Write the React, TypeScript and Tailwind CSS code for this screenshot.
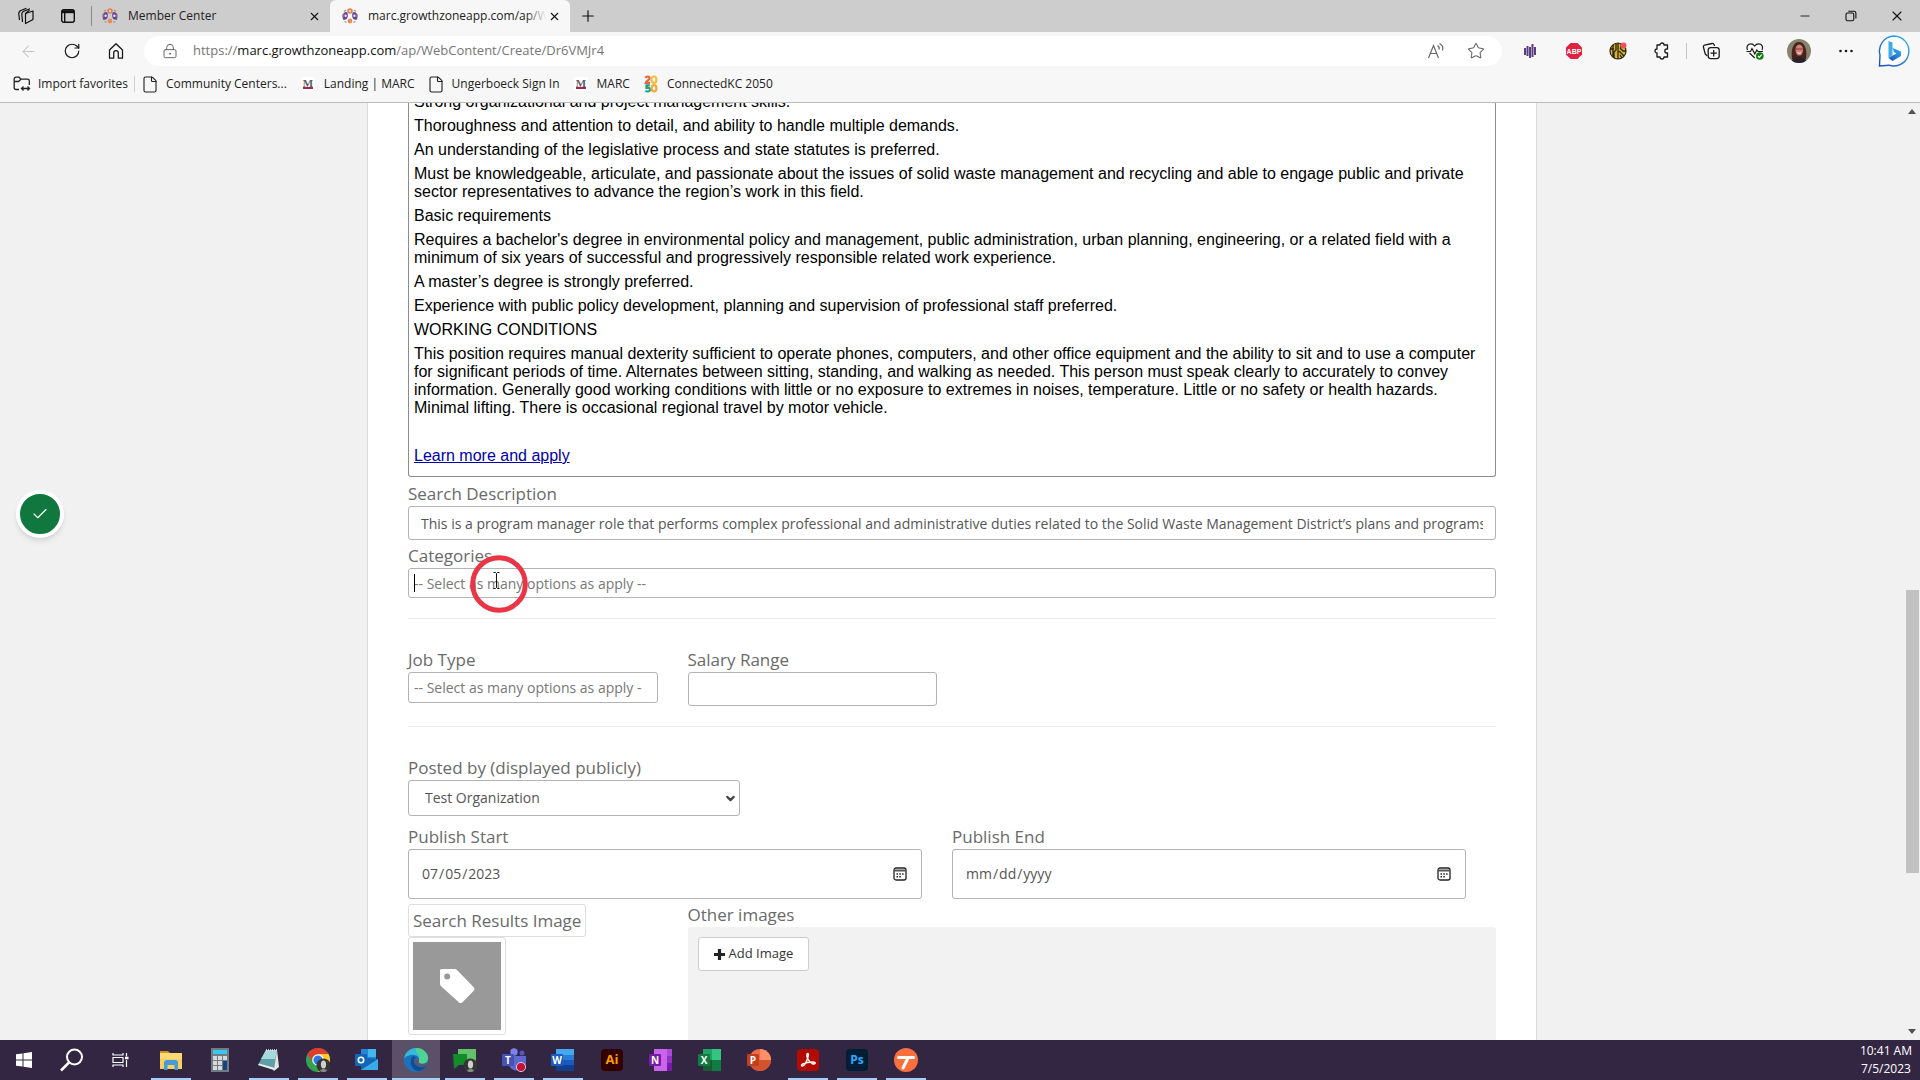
import type { ReactNode } from "react";
import {
  ArrowLeft,
  Check,
  ChevronDown,
  File,
  LockKeyhole,
  Minus,
  Plus,
  RotateCw,
  Star,
  X,
} from "lucide-react";

const editorParagraphs = [
  "Strong organizational and project management skills.",
  "Thoroughness and attention to detail, and ability to handle multiple demands.",
  "An understanding of the legislative process and state statutes is preferred.",
  "Must be knowledgeable, articulate, and passionate about the issues of solid waste management and recycling and able to engage public and private sector representatives to advance the region’s work in this field.",
  "Basic requirements",
  "Requires a bachelor's degree in environmental policy and management, public administration, urban planning, engineering, or a related field with a minimum of six years of successful and progressively responsible related work experience.",
  "A master’s degree is strongly preferred.",
  "Experience with public policy development, planning and supervision of professional staff preferred.",
  "WORKING CONDITIONS",
  "This position requires manual dexterity sufficient to operate phones, computers, and other office equipment and the ability to sit and to use a computer for significant periods of time. Alternates between sitting, standing, and walking as needed. This person must speak clearly to accurately to convey information. Generally good working conditions with little or no exposure to extremes in noises, temperature. Little or no safety or health hazards. Minimal lifting. There is occasional regional travel by motor vehicle.",
];

const fieldClass =
  "block w-full rounded-[3px] border border-[#b3b3b3] bg-white text-sm text-[#555] placeholder:text-[#777] outline-none";

/* ---------- browser chrome ---------- */

function GrowthZoneIcon() {
  return (
    <svg width="16" height="16" viewBox="0 0 16 16" className="shrink-0">
      <circle cx="8" cy="3" r="2" fill="#f0c9b5" stroke="#dd8257" strokeWidth="1.6" />
      <circle cx="8" cy="13" r="2.4" fill="#e88b5c" />
      <path d="M4.500 4C1 4 0 7 1 11.500c2.500 1 4.800-.5 4.800-3.500s-.3-3.400-1.300-4z" fill="#5c4799" />
      <path d="M11.500 4c3.500 0 4.500 3 3.500 7.500-2.500 1-4.800-.5-4.800-3.500s.3-3.400 1.300-4z" fill="#5c4799" />
      <circle cx="3.600" cy="7.700" r="1.200" fill="#e9e4f2" />
      <circle cx="12.400" cy="7.700" r="1.200" fill="#e9e4f2" />
      <path d="M2 3.500l2-1.500M14 3.500l-2-1.500M2.500 13.500l2 1M13.500 13.500l-2 1M.8 6v3.500M15.200 6v3.500" stroke="#c98a75" strokeWidth="1.300" />
    </svg>
  );
}

function MarcIcon() {
  return (
    <svg width="14" height="14" viewBox="0 0 14 14" className="shrink-0">
      <rect width="14" height="14" fill="#fff" />
      <text x="7" y="10" textAnchor="middle" fontSize="11" fontWeight="700" fontFamily="Liberation Serif, serif" fill="#5d5d66">
        M
      </text>
      <rect x="2" y="10" width="10" height="2" fill="#a3264c" />
    </svg>
  );
}

/* "2050" stacked in two rows, drawn with thick strokes */
function ConnectedIcon() {
  return (
    <svg width="14" height="18" viewBox="0 0 14 18" fill="none" strokeWidth="2.200" className="shrink-0">
      <path d="M1.500 3C2 1 5.500 1 5.500 3.200 5.500 5 2.500 6 1.800 7.800h4.200" stroke="#e8663f" />
      <ellipse cx="10" cy="4.700" rx="2.400" ry="3.200" stroke="#f5bd3d" />
      <path d="M5.800 10.300H2.500V13c3-.6 3.600.5 3.500 1.800-.2 2-3.300 2.200-4.500.8" stroke="#20a088" />
      <ellipse cx="10" cy="13.300" rx="2.400" ry="3.200" stroke="#f0a93a" />
    </svg>
  );
}

function ImportIcon() {
  return (
    <svg width="18" height="16" viewBox="0 0 18 16" fill="none" stroke="#222" strokeWidth="1.300" className="shrink-0">
      <path d="M6 13.500H3A1.800 1.800 0 0 1 1.200 11.700V3A1.800 1.800 0 0 1 3 1.200h3l2 2h6.500A1.800 1.800 0 0 1 16.300 5v4" />
      <path d="M1.200 5.500H5.500L8 3.200M8.500 12.500h8M10.500 10.500l-2 2 2 2M14.500 10.500l2 2-2 2" />
    </svg>
  );
}

function Tab({ title, active }: { title: string; active?: boolean }) {
  return (
    <div
      className={
        active
          ? "flex h-full w-60 items-center rounded-t-md bg-[#f7f7f7] pr-2 pl-3"
          : "flex h-full w-[238px] items-center pr-2 pl-[10px]"
      }
    >
      <GrowthZoneIcon />
      <span className="relative ml-[10px] min-w-0 flex-1 overflow-hidden whitespace-nowrap text-[#222]">
        {title}
        {active ? (
          <span className="absolute inset-y-0 right-0 w-5 bg-linear-to-r from-transparent to-[#f7f7f7]" />
        ) : null}
      </span>
      <button type="button" aria-label="Close tab" className="flex size-4 items-center justify-center">
        <X size={13} strokeWidth={2} />
      </button>
    </div>
  );
}

function TabStrip() {
  return (
    <div className="flex h-8 items-stretch bg-[#cdcdcd] text-xs text-[#111]">
      <button type="button" aria-label="Workspaces" className="flex w-[52px] items-center justify-center">
        <svg width="18" height="18" viewBox="0 0 18 18" fill="none" stroke="currentColor" strokeWidth="1.200">
          <path d="M8.500 6.500 16 4v8.500L8.500 16.500z" strokeLinejoin="round" />
          <path d="M5.500 15 4.800 6.500 6.200 4.500 13 1.800M2.500 13l-.8-7L3.200 3.800 9.500 1.200M8.500 6.500 12.500 3.200" />
        </svg>
      </button>
      <button type="button" aria-label="Tab actions" className="flex w-8 items-center justify-center">
        <svg width="16" height="16" viewBox="0 0 16 16" fill="none" stroke="currentColor" strokeWidth="1.400">
          <rect x="1.700" y="1.700" width="12.600" height="12.600" rx="2" />
          <path d="M2 3.700h12" strokeWidth="3" />
          <path d="M4.700 5v9" />
        </svg>
      </button>
      <span className="my-1.5 ml-[7px] w-px bg-[#888]" />
      <Tab title="Member Center" />
      <Tab title="marc.growthzoneapp.com/ap/WebContent" active />
      <button type="button" aria-label="New tab" className="flex w-9 items-center justify-center">
        <Plus size={18} strokeWidth={1.600} />
      </button>
      <div className="ml-auto flex">
        <button type="button" aria-label="Minimize" className="flex w-[46px] items-center justify-center">
          <Minus size={14} strokeWidth={1.500} />
        </button>
        <button type="button" aria-label="Restore" className="flex w-[46px] items-center justify-center">
          <svg width="12" height="12" viewBox="0 0 12 12" fill="none" stroke="currentColor" strokeWidth="1.100">
            <rect x="1" y="3" width="7.800" height="7.800" rx="1.500" />
            <path d="M3.300 1.200H9A1.900 1.900 0 0 1 10.900 3v5.500" />
          </svg>
        </button>
        <button type="button" aria-label="Close" className="flex w-[46px] items-center justify-center">
          <X size={16} strokeWidth={1.600} />
        </button>
      </div>
    </div>
  );
}

function ToolButton({ label, children }: { label: string; children: ReactNode }) {
  return (
    <button type="button" aria-label={label} className="flex h-8 w-11 shrink-0 items-center justify-center text-[#1b1b1b]">
      {children}
    </button>
  );
}

function Extensions() {
  return (
    <>
      <ToolButton label="Recorder">
        <svg width="12" height="14" viewBox="0 0 12 14" stroke="#5a3d82" strokeWidth="2">
          <path d="M1 4v7M3.500 2v10M6 3v11M8.500 0v13M11 3v8" />
        </svg>
      </ToolButton>
      <ToolButton label="Adblock Plus">
        <svg width="18" height="18" viewBox="0 0 18 18">
          <path d="M5.500 1h7L17 5.500v7L12.500 17h-7L1 12.500v-7z" fill="#e0213f" />
          <text x="9" y="12" textAnchor="middle" fontSize="7" fontWeight="700" fontFamily="Liberation Sans, sans-serif" fill="#fff">ABP</text>
        </svg>
      </ToolButton>
      <ToolButton label="Circuit">
        <svg width="18" height="18" viewBox="0 0 18 18" fill="none">
          <circle cx="9" cy="9" r="8" fill="#d9b52f" />
          <path d="M4 3v12M7 1.500V8L5 10v6M9 1v16M10 9l5 5M11 6l3 3h3M11 13l2 3M2 7h3M12 2v4" stroke="#28230f" strokeWidth="1.300" />
          <circle cx="9" cy="9" r="8" stroke="#2a2510" strokeWidth="1.200" />
          <circle cx="14.500" cy="3.500" r="3" fill="#f0535c" />
        </svg>
      </ToolButton>
      <ToolButton label="Extensions">
        <svg width="18" height="18" viewBox="0 0 18 18" fill="none" stroke="currentColor" strokeWidth="1.300" strokeLinejoin="round">
          <path d="M7 3a2 2 0 0 1 4 0h3.500v4h-.7a2 2 0 0 0 0 4h.7v4H11a2 2 0 0 1-4 0H4v-4a2 2 0 0 1 0-4V3z" />
        </svg>
      </ToolButton>
      <span className="mx-[2px] h-4 w-px bg-[#c4c4c4]" />
      <ToolButton label="Collections">
        <svg width="18" height="18" viewBox="0 0 18 18" fill="none" stroke="currentColor" strokeWidth="1.300" strokeLinecap="round">
          <path d="M12.500 3.500 11.800 2.200A1.500 1.500 0 0 0 10 1.500L2.500 3.200A1.500 1.500 0 0 0 1.400 5l1.800 7 1.600 1.500" />
          <rect x="6.200" y="5.600" width="11" height="11" rx="2.500" />
          <path d="M11.700 8.300v5.600M8.900 11.100h5.600" />
        </svg>
      </ToolButton>
      <ToolButton label="Browser essentials">
        <svg width="18" height="18" viewBox="0 0 18 18" fill="none" stroke="currentColor" strokeWidth="1.200">
          <path d="M1.500 8C0 4.500 2 1.800 4.800 1.800c2 0 3 .9 3.900 2.200.9-1.300 2-2.200 4-2.200C15.500 1.800 17.500 4.500 16 8M3.500 11l5.200 5M.5 9.500h4L6 6.500l2.800 5.500 2-4 1.300 1.500H17" />
          <circle cx="13.800" cy="14" r="3.800" fill="#0f7b0f" stroke="none" />
          <path d="m12 14 1.300 1.300 2.400-2.600" stroke="#fff" />
        </svg>
      </ToolButton>
      <ToolButton label="Profile">
        <svg width="24" height="24" viewBox="0 0 24 24">
          <clipPath id="avatar">
            <circle cx="12" cy="12" r="12" />
          </clipPath>
          <g clipPath="url(#avatar)">
            <rect width="24" height="24" fill="#87836f" />
            <path d="M5 20C3.500 9 7 3 12 3s8.500 6 7 17z" fill="#4a241c" />
            <path d="M4 24c1-5 4-6 8-6s7 1 8 6z" fill="#29222a" />
            <ellipse cx="12.300" cy="11" rx="3.800" ry="5.500" fill="#c98575" />
            <path d="M8.800 10h7" stroke="#9c2d39" />
            <path d="M10.500 13.500c1 1 2.500 1 3.500 0" stroke="#fff" fill="none" />
          </g>
        </svg>
      </ToolButton>
      <span className="w-[3px]" />
      <ToolButton label="Settings and more">
        <svg width="16" height="4" viewBox="0 0 16 4" fill="currentColor">
          <circle cx="2.500" cy="2" r="1.300" />
          <circle cx="8" cy="2" r="1.300" />
          <circle cx="13.500" cy="2" r="1.300" />
        </svg>
      </ToolButton>
      <button type="button" aria-label="Bing" className="ml-2 flex w-9 shrink-0 items-center justify-center">
        <svg width="32" height="32" viewBox="0 0 32 32" fill="none">
          <defs>
            <linearGradient id="bing" x1="0" y1="1" x2="1" y2="0">
              <stop stopColor="#1b4aba" />
              <stop offset="1" stopColor="#38b6ec" />
            </linearGradient>
          </defs>
          <path d="M16 1a15 15 0 1 1-5 29.200L1.500 31l.5-11A15 15 0 0 1 16 1z" fill="#fff" stroke="url(#bing)" strokeWidth="1.400" />
          <path d="m10.500 6 4 1.500V20l-4 3z" fill="#3aaeea" />
          <path d="m10.500 23 4-2.500 4-2-2.500-1.500-1.300-4 8.300 3.500v4.500l-8.500 5z" fill="url(#bing)" />
        </svg>
      </button>
    </>
  );
}

function Toolbar() {
  return (
    <div className="flex h-[38px] items-center bg-[#f7f7f7] pr-2 pl-[6px]">
      <button type="button" aria-label="Back" className="flex w-11 justify-center text-[#c6c6c6]">
        <ArrowLeft size={19} strokeWidth={1.300} />
      </button>
      <ToolButton label="Refresh">
        <RotateCw size={18} strokeWidth={1.600} />
      </ToolButton>
      <ToolButton label="Home">
        <svg width="18" height="18" viewBox="0 0 18 18" fill="none" stroke="currentColor" strokeWidth="1.300" strokeLinejoin="round">
          <path d="M2.500 8 9 1.800 15.500 8v8.200h-4.200V11a2.300 2.300 0 0 0-4.600 0v5.200H2.500z" />
        </svg>
      </ToolButton>
      <div className="ml-[6px] flex h-[30px] min-w-0 flex-1 items-center rounded-full bg-white pl-[18px] text-[#666]">
        <LockKeyhole size={16} strokeWidth={1.500} className="shrink-0" />
        <div className="ml-[15px] flex-1 truncate text-[13px] text-[#767676]">
          https://<span className="text-[#111]">marc.growthzoneapp.com</span>/ap/WebContent/Create/Dr6VMJr4
        </div>
        <button type="button" aria-label="Read aloud" className="flex w-10 justify-center">
          <svg width="18" height="18" viewBox="0 0 18 18" fill="none" stroke="currentColor" strokeWidth="1.200">
            <path d="M1.500 16 6.500 3.500 11.500 16M3.300 11.500h6.400M10.500 3.500c1.500 1 2 2.500 1.500 4M12.500 1.500c3 1.500 4 4 3 7" />
          </svg>
        </button>
        <button type="button" aria-label="Favorite" className="mr-1.5 flex w-10 justify-center">
          <Star size={18} strokeWidth={1.400} />
        </button>
      </div>
      <div className="ml-[6px] flex items-center">
        <Extensions />
      </div>
    </div>
  );
}

function Bookmark({ icon, label }: { icon: ReactNode; label: string }) {
  return (
    <a href="#bookmark" className="flex items-center gap-[7px] whitespace-nowrap">
      <span className="flex w-[18px] justify-center">{icon}</span>
      {label}
    </a>
  );
}

function BookmarkBar() {
  const page = <File size={19} strokeWidth={1.500} />;

  return (
    <nav className="flex h-[33px] items-center border-b border-[#bbb] bg-[#f7f7f7] pb-1 pl-[13px] text-xs text-[#222]">
      <Bookmark icon={<ImportIcon />} label="Import favorites" />
      <span className="mx-[6px] h-4 w-px bg-[#d0d0d0]" />
      <div className="flex gap-3">
        <Bookmark icon={page} label="Community Centers..." />
        <Bookmark icon={<MarcIcon />} label="Landing | MARC" />
        <Bookmark icon={page} label="Ungerboeck Sign In" />
        <Bookmark icon={<MarcIcon />} label="MARC" />
        <Bookmark icon={<ConnectedIcon />} label="ConnectedKC 2050" />
      </div>
    </nav>
  );
}

/* ---------- page content ---------- */

function Label({ htmlFor, children }: { htmlFor: string; children: ReactNode }) {
  return (
    <label htmlFor={htmlFor} className="block text-[17px] leading-6 text-[#6a6a6a]">
      {children}
    </label>
  );
}

function DateField({ id, label, value }: { id: string; label: string; value?: string }) {
  return (
    <div>
      <Label htmlFor={id}>{label}</Label>
      <div className="relative">
        <input
          id={id}
          type="date"
          defaultValue={value}
          className={`${fieldClass} h-[50px] px-3 [&::-webkit-calendar-picker-indicator]:opacity-0`}
        />
        <svg width="14" height="14" viewBox="0 0 14 14" fill="none" className="pointer-events-none absolute top-[18px] right-[15px]">
          <rect x="1" y="1" width="12" height="12" rx="2" stroke="#222" strokeWidth="1.300" />
          <path d="M1 3.500h12" stroke="#555" strokeWidth="2" />
          <path d="M3.500 7h1.500M6.300 7h1.500M9.100 7h1.500M3.500 9.700h1.500M6.300 9.700h1.500" stroke="#222" strokeWidth="1.400" />
        </svg>
      </div>
    </div>
  );
}

function DescriptionEditor() {
  return (
    <div className="flex h-[374px] flex-col justify-end overflow-hidden rounded-b-[3px] border border-t-0 border-[#8c8c8c] px-[5px] pb-[11px] font-['Liberation_Sans',Arial,sans-serif] text-base leading-[18px] text-black">
      <div className="space-y-[6px]">
        {editorParagraphs.map((text) => (
          <p key={text}>{text}</p>
        ))}
        <p>&nbsp;</p>
        <p>
          <a href="#apply" className="text-[#0000a8] underline">
            Learn more and apply
          </a>
        </p>
      </div>
    </div>
  );
}

function ClickMarker() {
  return (
    <svg width="58" height="58" viewBox="0 0 58 58" fill="none" className="pointer-events-none absolute -top-[13px] left-[62px]">
      <circle cx="29" cy="29" r="26.300" stroke="#ea3546" strokeWidth="5" />
      <path d="M23.500 17.500h2l1 1 1-1h2M26.500 18.500v14M23.500 33.500h2l1-1 1 1h2" stroke="#111" />
    </svg>
  );
}

function JobForm() {
  return (
    <form className="mx-auto h-full w-full max-w-[1170px] border-x border-[#dcdce0] bg-white px-10">
      <DescriptionEditor />

      <div className="mt-[5px]">
        <Label htmlFor="search-description">Search Description</Label>
        <input
          id="search-description"
          type="text"
          className={`${fieldClass} h-[34px] px-3`}
          defaultValue="This is a program manager role that performs complex professional and administrative duties related to the Solid Waste Management District’s plans and programs"
        />
      </div>

      <div className="mt-1">
        <Label htmlFor="categories">Categories</Label>
        <div className="relative">
          <input
            id="categories"
            type="text"
            placeholder="-- Select as many options as apply --"
            className={`${fieldClass} h-[30px] px-[5px]`}
          />
          <span className="absolute top-[6px] left-[6px] h-[18px] w-px bg-black" />
          <ClickMarker />
        </div>
      </div>

      <hr className="mt-5 mb-[29px] border-[#ebebeb]" />

      <div className="grid grid-cols-4 gap-x-[30px]">
        <div>
          <Label htmlFor="job-type">Job Type</Label>
          <input
            id="job-type"
            type="text"
            placeholder="-- Select as many options as apply --"
            className={`${fieldClass} h-[31px] pr-[15px] pl-[5px]`}
          />
        </div>
        <div>
          <Label htmlFor="salary">Salary Range</Label>
          <input id="salary" type="text" className={`${fieldClass} h-[34px] px-3`} />
        </div>
      </div>

      <hr className="mt-5 mb-[29px] border-[#ebebeb]" />

      <Label htmlFor="posted-by">Posted by (displayed publicly)</Label>
      <div className="relative w-[332px]">
        <select id="posted-by" className={`${fieldClass} h-9 appearance-none px-4`}>
          <option>Test Organization</option>
        </select>
        <ChevronDown size={13} strokeWidth={4} className="pointer-events-none absolute top-3 right-[3px] text-[#444]" />
      </div>

      <div className="mt-[9px] grid grid-cols-2 gap-x-[30px] pr-[30px]">
        <DateField id="publish-start" label="Publish Start" value="2023-07-05" />
        <DateField id="publish-end" label="Publish End" />
      </div>

      <div className="mt-1 grid grid-cols-4 gap-x-[30px]">
        <div className="flex flex-col items-start pt-px">
          <label
            htmlFor="results-image"
            className="rounded-[3px] border border-[#dedede] px-1 text-[17px] leading-[31px] whitespace-nowrap text-[#6a6a6a]"
          >
            Search Results Image
          </label>
          <button id="results-image" type="button" className="rounded-[3px] border border-[#dedede] p-1">
            <span className="flex size-[88px] items-center justify-center bg-[#999]">
              <svg width="36" height="36" viewBox="0 0 36 36">
                <path
                  fillRule="evenodd"
                  d="M3 1h12c1.500 0 2.500.4 3.500 1.400L34.500 19c1.300 1.400 1.300 2.600 0 4L23.500 34.200c-1.200 1.200-2.500 1.200-3.700 0L2.300 18.500C1.300 17.500 1 16.500 1 15V3c0-1.300.7-2 2-2zm5.200 4.500a3 3 0 1 0 0 6 3 3 0 0 0 0-6z"
                  fill="#fff"
                />
              </svg>
            </span>
          </button>
        </div>
        <div className="col-span-3">
          <Label htmlFor="add-image">Other images</Label>
          <div className="h-40 rounded-[3px] bg-[#f2f2f2] px-[10px] pt-[10px]">
            <button
              id="add-image"
              type="button"
              className="flex h-[34px] items-center gap-1 rounded-[3px] border border-[#ccc] bg-white px-[15px] text-[13px] text-[#333]"
            >
              <svg width="11" height="11" viewBox="0 0 11 11">
                <path d="M5.500 0v11M0 5.500h11" stroke="#222" strokeWidth="3.200" />
              </svg>
              Add Image
            </button>
          </div>
        </div>
      </div>
    </form>
  );
}

function Scrollbar() {
  return (
    <div className="flex w-4 shrink-0 flex-col items-center bg-[#f1f1f1] py-1.5 text-[#505050]">
      <svg width="8" height="5" viewBox="0 0 8 5" fill="currentColor">
        <path d="M0 5 4 0l4 5z" />
      </svg>
      <div className="flex w-full flex-1 flex-col items-center">
        <span className="basis-[52%]" />
        <span className="w-[13px] basis-[31%] bg-[#c1c1c1]" />
      </div>
      <svg width="8" height="5" viewBox="0 0 8 5" fill="currentColor">
        <path d="M0 0h8L4 5z" />
      </svg>
    </div>
  );
}

/* ---------- taskbar ---------- */

function AppIcon({ children }: { children: ReactNode }) {
  return (
    <svg width="24" height="24" viewBox="0 0 24 24" fill="none" fontFamily="Open Sans, sans-serif" fontWeight="700">
      {children}
    </svg>
  );
}

function OfficeBadge({ letter, color }: { letter: string; color: string }) {
  return (
    <>
      <rect x="0" y="6" width="12" height="12" rx="1" fill={color} />
      <text x="6" y="15.500" textAnchor="middle" fontSize="10" fill="#fff">
        {letter}
      </text>
    </>
  );
}

function MiniFace() {
  return (
    <g>
      <circle cx="17.500" cy="17.500" r="7" fill="#353535" />
      <ellipse cx="17.500" cy="16.500" rx="2.600" ry="4" fill="#cfcfcf" />
      <path d="M14 22.500c1.500-2 5.500-2 7 0-1.500 2-5.500 2-7 0z" fill="#888" />
    </g>
  );
}

type TaskbarApp = { name: string; state?: "running" | "active"; icon: ReactNode };

const taskbarApps: TaskbarApp[] = [
  {
    name: "File Explorer",
    state: "running",
    icon: (
      <>
        <path d="M1 3h8l2 2H1z" fill="#cf9518" />
        <path d="M1 5h22v16H1z" fill="#f8cf61" />
        <path d="M1 5h22v6H1z" fill="#fbd977" />
        <path d="M5 22v-7c0-2 1-3 3-3h8c2 0 3 1 3 3v7h-3.500v-5h-7v5z" fill="#459bd3" />
      </>
    ),
  },
  {
    name: "Calculator",
    icon: (
      <>
        <rect x="3" y="0" width="18" height="24" fill="#707b83" />
        <rect x="5" y="2" width="14" height="4" fill="#38c8f1" />
        <path d="M5 8h4v4H5zM10 8h4v4h-4zM15 8h4v4h-4zM5 13h4v4H5zM10 13h4v4h-4zM5 18h4v4H5zM10 18h4v4h-4z" fill="#d6dadd" />
        <path d="M15 13h4v9h-4z" fill="#154481" />
      </>
    ),
  },
  {
    name: "Notepad",
    state: "running",
    icon: (
      <>
        <path d="m20 2 2 17-5 4-2-3z" fill="#e6e5df" />
        <path d="M9 2h11l-3 20L1 17z" fill="#5f9fa8" />
        <path d="M9 2h11l-2 9-14 0z" fill="#a4dade" />
        <path d="m1 17 16 5 1-2L2 15.500z" fill="#e9ecea" />
        <path d="M9 2h11" stroke="#dfe3df" strokeWidth="1.500" strokeDasharray="1 1" />
      </>
    ),
  },
  {
    name: "Chrome",
    state: "running",
    icon: (
      <>
        <circle cx="12" cy="12" r="12" fill="#32a350" />
        <path d="M1.600 6A12 12 0 0 1 22.400 6H12a6 6 0 0 0-5.200 9z" fill="#e33b2e" />
        <path d="M12 6h10.400A12 12 0 0 1 12 24l5.200-9z" fill="#fccb2d" />
        <circle cx="12" cy="12" r="5.800" fill="#fff" />
        <circle cx="12" cy="12" r="4.600" fill="#2f78e6" />
        <MiniFace />
      </>
    ),
  },
  {
    name: "Outlook",
    state: "running",
    icon: (
      <>
        <rect x="6" y="1" width="15" height="16" fill="#2386d8" />
        <path d="M13 1h8v8h-8z" fill="#46b6ee" />
        <path d="M6 9 23 11v11H6z" fill="#1664b5" />
        <path d="m23 11-17 11h17z" fill="#3baae9" />
        <rect y="6" width="12" height="12" rx="1" fill="#1066b8" />
        <circle cx="6" cy="12" r="2.700" stroke="#fff" strokeWidth="1.600" />
      </>
    ),
  },
  {
    name: "Edge",
    state: "active",
    icon: (
      <>
        <circle cx="12" cy="12" r="12" fill="#1a72bd" />
        <path d="M0 11C1 4 6 0 12 0c7 0 12 5 12 10 0 4-3 6-6 6-3 0-4-1-3-3 1-4-2-6-6-6-5 0-8 2-9 4z" fill="#37b8d8" />
        <path d="M12 0c7 0 12 5 12 10 0 4-3 6-6 6-3 0-4-1-3-3 1-4 0-7-3-9z" fill="#4fd392" />
        <path d="M9 8c-4 4-3 12 4 15 4 0 8-2 9.500-5.500C17 21 10 18 10 13c0-2 1-3 2-3.500C11 8.500 10 8 9 8z" fill="#134d91" />
        <path d="M11 11c-2 6 5 9 11.500 6.500l1.500-3-4 1c-4 1-6-.5-5-3-.5-2-3-2.500-4-1.500z" fill="#5b5570" />
      </>
    ),
  },
  {
    name: "Chat",
    state: "running",
    icon: (
      <>
        <path d="M5 1h18v16H5z" fill="#62c169" />
        <path d="M0 6h14v11H6l-5 4z" fill="#128b29" />
        <MiniFace />
      </>
    ),
  },
  {
    name: "Teams",
    state: "running",
    icon: (
      <>
        <circle cx="12" cy="4" r="3.700" fill="#7b83eb" />
        <circle cx="20" cy="5" r="2.500" fill="#5059c9" />
        <path d="M7 8h17v9l-6 5c-6 2-11-2-11-6z" fill="#6068d0" />
        <OfficeBadge letter="T" color="#4650b5" />
        <circle cx="19" cy="19" r="4.600" fill="#c4123a" stroke="#eee" strokeWidth=".8" />
      </>
    ),
  },
  {
    name: "Word",
    state: "running",
    icon: (
      <>
        <path d="M5 1h18v6H5z" fill="#43a8ee" />
        <path d="M5 7h18v5H5z" fill="#2b7cd5" />
        <path d="M5 12h18v5H5z" fill="#185abd" />
        <path d="M5 17h18v6H5z" fill="#113f8c" />
        <OfficeBadge letter="W" color="#1a5cbf" />
      </>
    ),
  },
  {
    name: "Illustrator",
    icon: (
      <>
        <rect x="1" width="22" height="22" y="1" rx="4" fill="#330000" />
        <text x="12" y="16" textAnchor="middle" fontSize="13" fill="#ff9a00">Ai</text>
      </>
    ),
  },
  {
    name: "OneNote",
    icon: (
      <>
        <path d="M5 1h18v22H5z" fill="#ca64ea" />
        <path d="M18 1h5v7h-5z" fill="#ae4bd5" />
        <path d="M18 8h5v7h-5z" fill="#9332bf" />
        <path d="M18 15h5v8h-5z" fill="#7719aa" />
        <OfficeBadge letter="N" color="#7719aa" />
      </>
    ),
  },
  {
    name: "Excel",
    icon: (
      <>
        <path d="M5 1h9v11H5z" fill="#21a366" />
        <path d="M14 1h9v11h-9z" fill="#33c481" />
        <path d="M5 12h9v11H5z" fill="#185c37" />
        <path d="M14 12h9v11h-9z" fill="#107c41" />
        <OfficeBadge letter="X" color="#107c41" />
      </>
    ),
  },
  {
    name: "PowerPoint",
    icon: (
      <>
        <circle cx="13" cy="12" r="11" fill="#ed6c47" />
        <path d="M13 1a11 11 0 0 1 11 11H13z" fill="#ff8f6b" />
        <path d="M2 12h22a11 11 0 0 1-22 0z" fill="#d35230" />
        <OfficeBadge letter="P" color="#c43e1c" />
      </>
    ),
  },
  {
    name: "Acrobat",
    state: "running",
    icon: (
      <>
        <rect x="1" width="22" height="22" y="1" rx="4" fill="#b30b00" />
        <path d="M6 18c-2-1 2-4 11-4 4 0 2 3-1 1.500C12 13 10 8 11 6c1-1.500 2 0 1 3-1 4-4 10-6 9z" stroke="#fff" strokeWidth="1.400" />
      </>
    ),
  },
  {
    name: "Photoshop",
    state: "running",
    icon: (
      <>
        <rect x="1" width="22" height="22" y="1" rx="4" fill="#001e36" />
        <text x="12" y="16" textAnchor="middle" fontSize="12" fill="#31a8ff">Ps</text>
      </>
    ),
  },
  {
    name: "TechSmith",
    state: "running",
    icon: (
      <>
        <circle cx="12" cy="12" r="12" fill="#f9703e" />
        <path d="M4.500 9.500h15M14 10 9 20" stroke="#fff" strokeWidth="3" strokeLinecap="round" />
      </>
    ),
  },
];

function Taskbar() {
  return (
    <footer className="flex h-10 shrink-0 items-stretch bg-[#322643] text-white">
      <button type="button" aria-label="Start" className="flex w-12 items-center justify-center">
        <svg width="16" height="16" viewBox="0 0 16 16" fill="currentColor">
          <path d="M0 2.300 6.500 1.400v6.100H0zM7.500 1.200 16 0v7.500H7.500zM0 8.500h6.500v6.100L0 13.700zM7.500 8.500H16V16l-8.500-1.200z" />
        </svg>
      </button>
      <button type="button" aria-label="Search" className="flex w-12 items-center justify-center">
        <svg width="24" height="24" viewBox="0 0 24 24" fill="none" stroke="currentColor" strokeWidth="2">
          <circle cx="14.500" cy="9" r="7.500" />
          <path d="m9 14.500-8 8" strokeWidth="2.500" />
        </svg>
      </button>
      <button type="button" aria-label="Task view" className="mr-[3px] flex w-12 items-center justify-center">
        <svg width="17" height="16" viewBox="0 0 17 16" fill="none" stroke="currentColor" strokeWidth="1.200">
          <path d="M1 1v2h10V1M1 15v-2h10v2M1 5.500h10v5H1zM14.500 1v3.500M14.500 8v7M13 6h3" />
          <path d="M13 6h3.500" strokeWidth="2.500" />
        </svg>
      </button>
      <div className="flex gap-px">
        {taskbarApps.map((app) => (
          <button
            key={app.name}
            type="button"
            aria-label={app.name}
            className={
              app.state === "active"
                ? "relative flex w-12 items-center justify-center bg-[#5a5068]"
                : "relative flex w-12 items-center justify-center"
            }
          >
            <AppIcon>{app.icon}</AppIcon>
            {app.state ? (
              <span
                className={
                  app.state === "active"
                    ? "absolute inset-x-0 bottom-0 h-[2px] bg-[#a6d0f7]"
                    : "absolute inset-x-1 bottom-0 h-[2px] bg-[#a6d0f7]"
                }
              />
            ) : null}
          </button>
        ))}
      </div>
      <div className="ml-auto flex flex-col justify-center pr-2 text-center text-xs leading-[18px]">
        <span>10:41 AM</span>
        <span>7/5/2023</span>
      </div>
    </footer>
  );
}

export default function App() {
  return (
    <div className="flex h-screen flex-col overflow-hidden bg-[#f1f1f1] font-['Open_Sans','Noto_Sans',sans-serif]">
      <header className="shrink-0">
        <TabStrip />
        <Toolbar />
        <BookmarkBar />
      </header>
      <div className="relative flex min-h-0 flex-1">
        <main className="min-w-0 flex-1 overflow-hidden">
          <JobForm />
        </main>
        <Scrollbar />
        <div className="absolute top-[387px] left-4 flex size-12 items-center justify-center rounded-full border-4 border-white bg-[#10783f] text-white shadow-md">
          <Check size={18} strokeWidth={1.500} />
        </div>
      </div>
      <Taskbar />
    </div>
  );
}
